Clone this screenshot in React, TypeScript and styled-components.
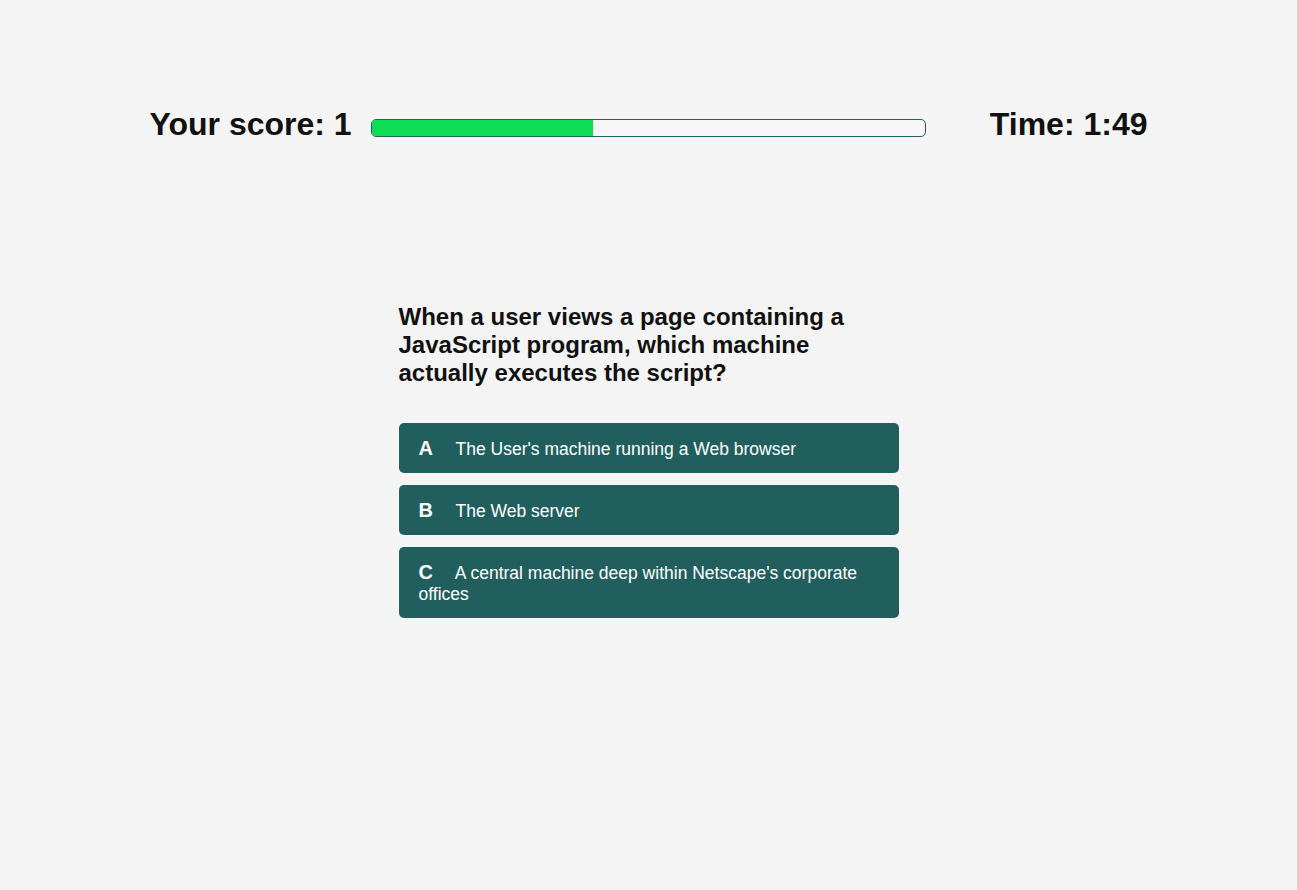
import React from "react";
import styled, { createGlobalStyle } from "styled-components";

const GlobalStyle = createGlobalStyle`
  html, body {
    margin: 0;
    padding: 0;
    background: #f4f4f4;
    font-family: "Liberation Sans", Arial, sans-serif;
    color: #111;
  }
`;

const Page = styled.div`
  min-height: 890px;
  padding-top: 106px;
  box-sizing: border-box;
`;

const Header = styled.header`
  width: 998px;
  margin: 0 auto;
  display: flex;
  align-items: center;
`;

const Heading = styled.h2<{ $push?: boolean }>`
  margin: 0;
  margin-left: ${(p) => (p.$push ? "auto" : "0")};
  font-size: 32px;
  font-weight: 700;
  line-height: normal;
  color: #111;
`;

const ProgressTrack = styled.div`
  width: 555px;
  height: 18px;
  margin-left: 19px;
  margin-top: 7px;
  box-sizing: border-box;
  border: 1px solid #215f5f;
  border-radius: 5px;
  background: #f6f6f6;
  overflow: hidden;
`;

const ProgressFill = styled.div`
  height: 100%;
  background: #0fdc55;
`;

const Quiz = styled.main`
  width: 500px;
  margin: 160px auto 0;
`;

const Question = styled.h3`
  margin: 0 0 36px;
  font-size: 24px;
  font-weight: 700;
  line-height: normal;
  color: #111;
  padding-right: 40px;
`;

const Options = styled.div`
  display: flex;
  flex-direction: column;
  gap: 12.5px;
`;

const Option = styled.button`
  display: block;
  width: 100%;
  text-align: left;
  border: none;
  border-radius: 5px;
  background: #215f5f;
  color: #fff;
  font-family: "Liberation Sans", Arial, sans-serif;
  font-size: 17.5px;
  line-height: normal;
  padding: 14px 20px 12.5px;
  cursor: pointer;
`;

const Letter = styled.span`
  font-weight: 700;
  font-size: 20px;
  margin-right: 18px;
`;

const options = [
  { key: "A", text: "The User's machine running a Web browser" },
  { key: "B", text: "The Web server" },
  { key: "C", text: "A central machine deep within Netscape's corporate offices" },
];

export default function App() {
  const progress = 40;
  return (
    <>
      <GlobalStyle />
      <Page>
        <Header>
          <Heading>Your score: 1</Heading>
          <ProgressTrack>
            <ProgressFill style={{ width: `${progress}%` }} />
          </ProgressTrack>
          <Heading $push>Time: 1:49</Heading>
        </Header>
        <Quiz>
          <Question>
            When a user views a page containing a JavaScript program, which machine actually executes the script?
          </Question>
          <Options>
            {options.map((o) => (
              <Option key={o.key}>
                <Letter>{o.key}</Letter> {o.text}
              </Option>
            ))}
          </Options>
        </Quiz>
      </Page>
    </>
  );
}
